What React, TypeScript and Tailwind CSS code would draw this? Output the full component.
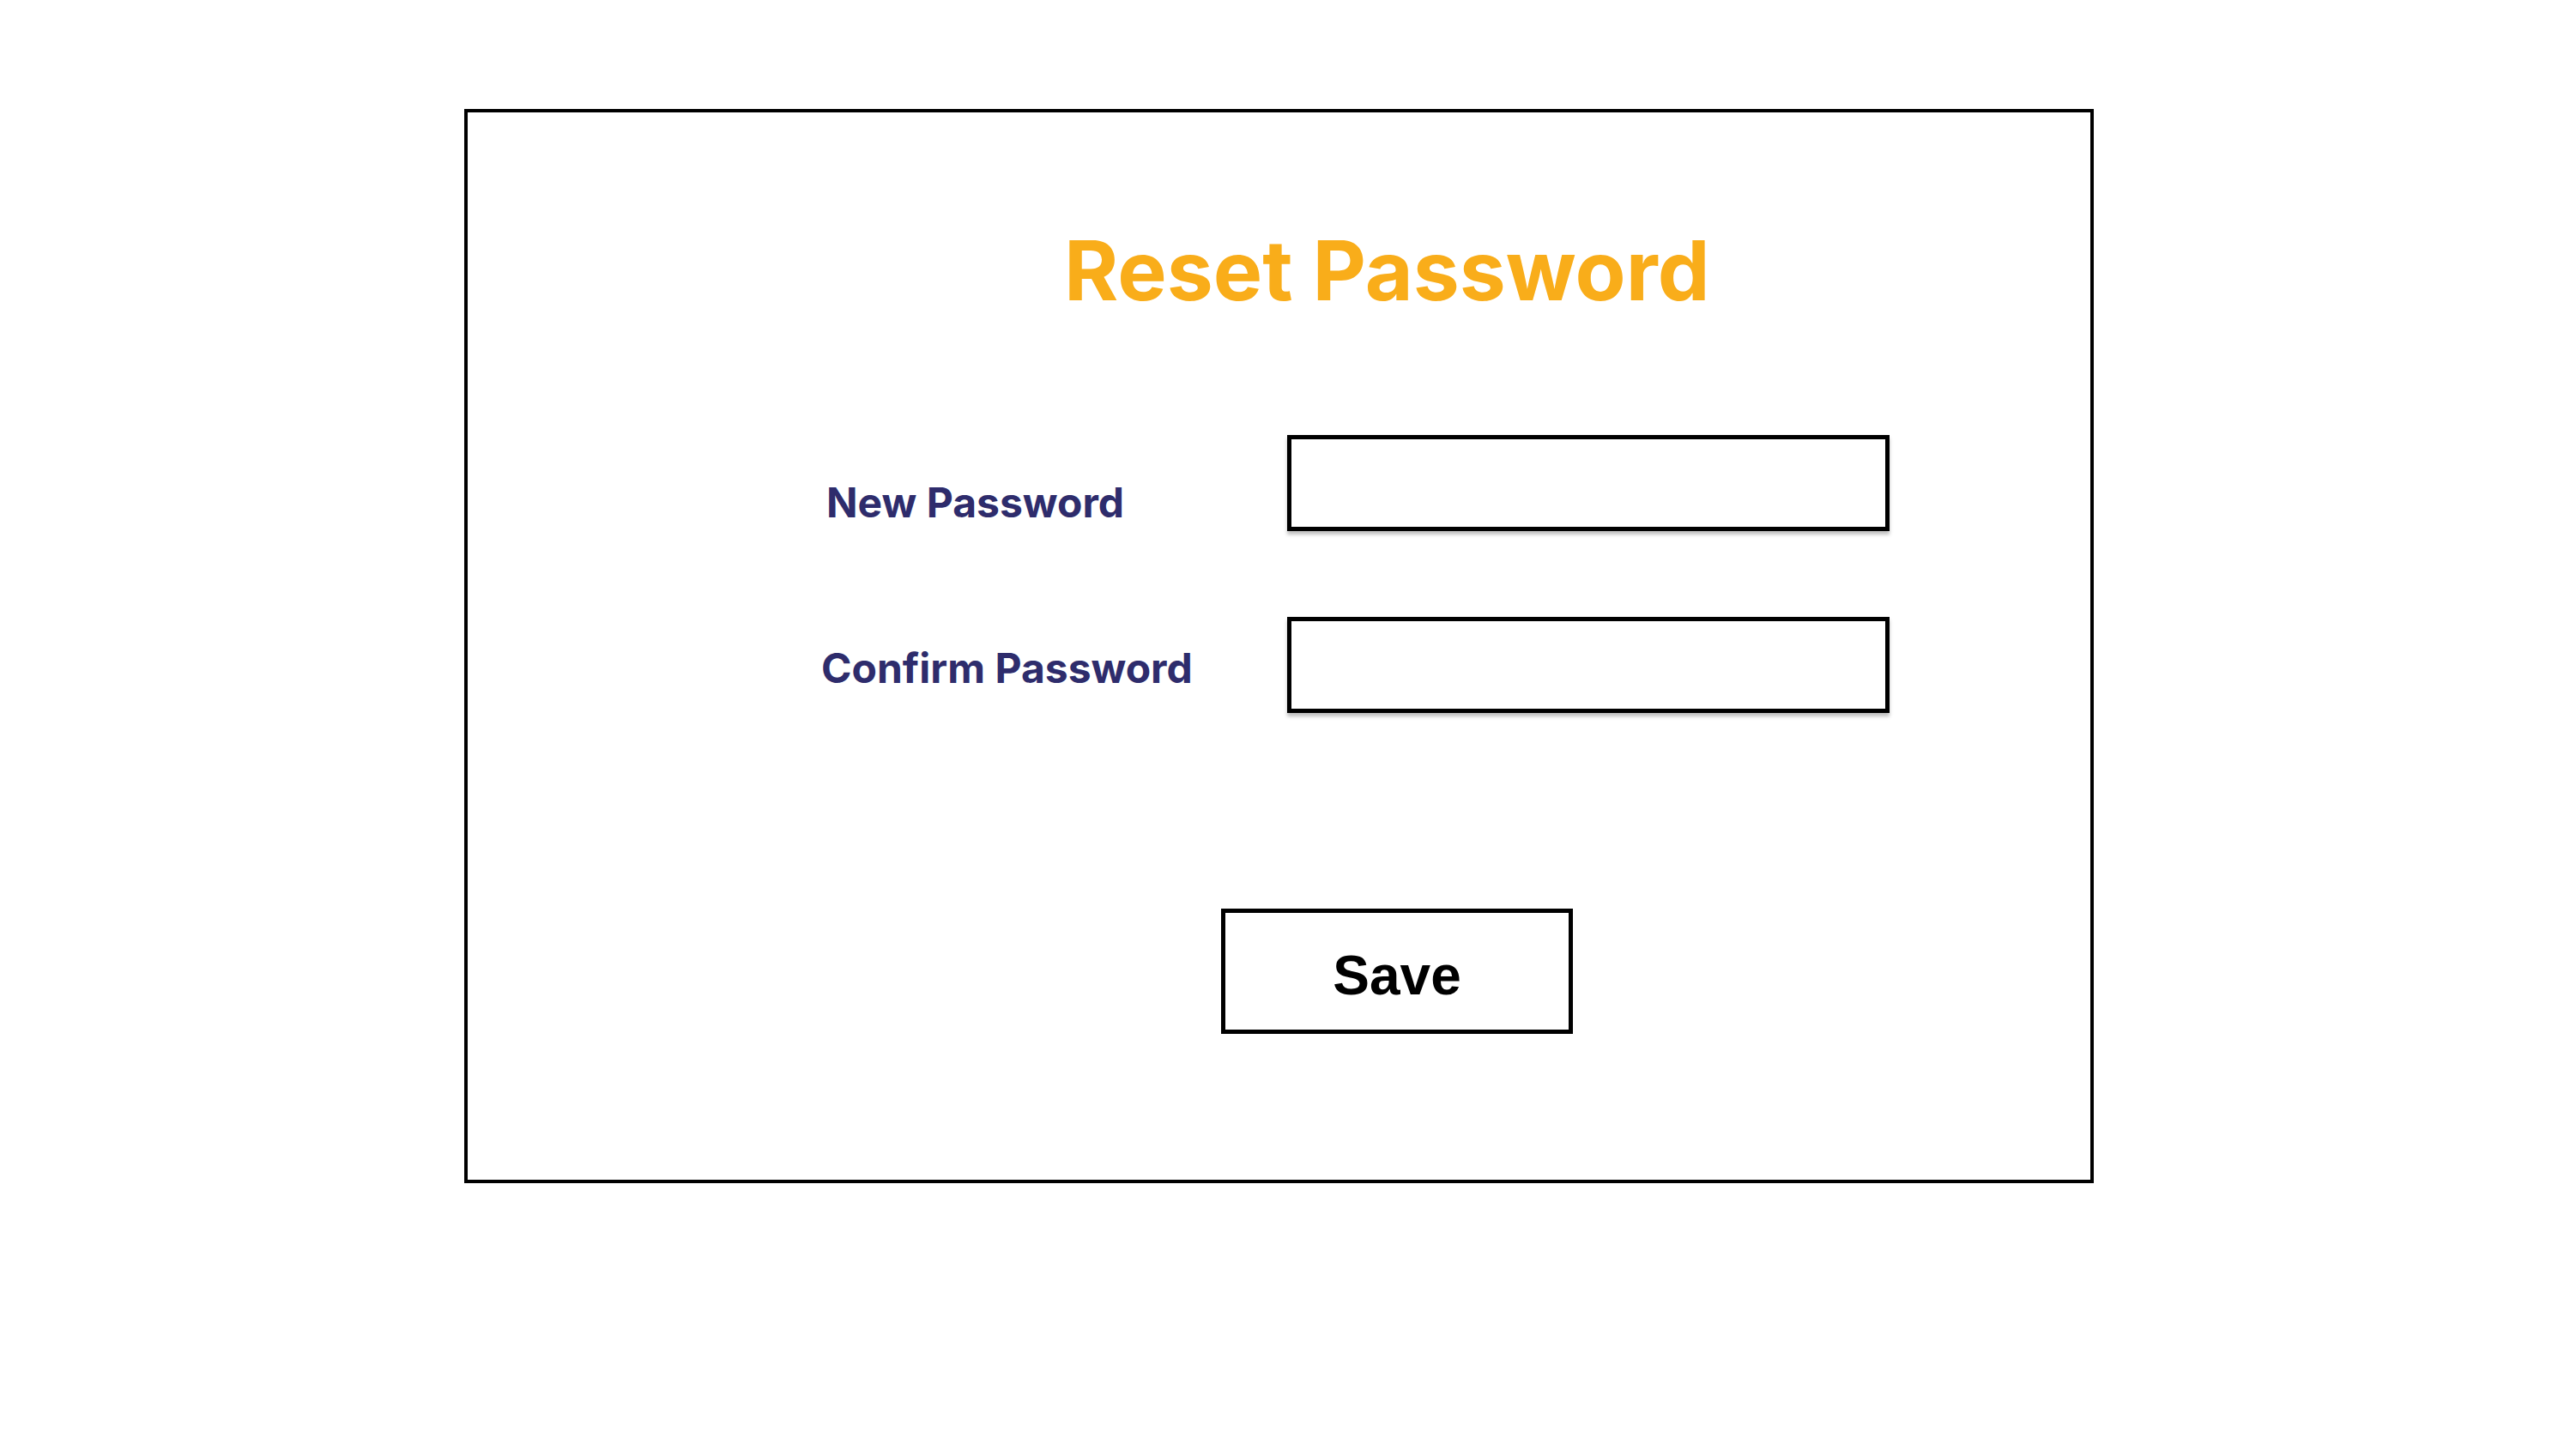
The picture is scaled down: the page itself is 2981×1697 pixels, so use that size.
export default function App() {
  return (
    <div className="min-h-[1697px] w-full bg-white font-['Inter',sans-serif] pt-[127px] pl-[541px]">
      <div className="w-[1899px] h-[1252px] border-4 border-black">
        <h1 className="mt-[136px] ml-[695px] text-[96.5px] leading-[96px] font-bold text-[#F9AD1A]">
          Reset Password
        </h1>

        <div className="flex mt-[144px]">
          <div className="w-[955px] pl-[418px] pt-[55px]">
            <label className="block text-[48px] leading-[48px] font-bold text-[#2E2C6C]">New Password</label>
          </div>
          <input
            type="password"
            className="w-[702px] h-[112px] border-[5px] border-black bg-white shadow-[0_4px_4px_rgba(0,0,0,0.25)] outline-none"
          />
        </div>

        <div className="flex mt-[100px]">
          <div className="w-[955px] pl-[412px] pt-[36px]">
            <label className="block text-[48px] leading-[48px] font-bold text-[#2E2C6C]">Confirm Password</label>
          </div>
          <input
            type="password"
            className="w-[702px] h-[112px] border-[5px] border-black bg-white shadow-[0_4px_4px_rgba(0,0,0,0.25)] outline-none"
          />
        </div>

        <button className="mt-[228px] ml-[878px] w-[410px] h-[146px] border-[5px] border-black bg-white flex items-center justify-center pt-[10px] font-['Liberation_Sans',Arial,sans-serif] text-[64px] font-bold text-black">
          Save
        </button>
      </div>
    </div>
  );
}
